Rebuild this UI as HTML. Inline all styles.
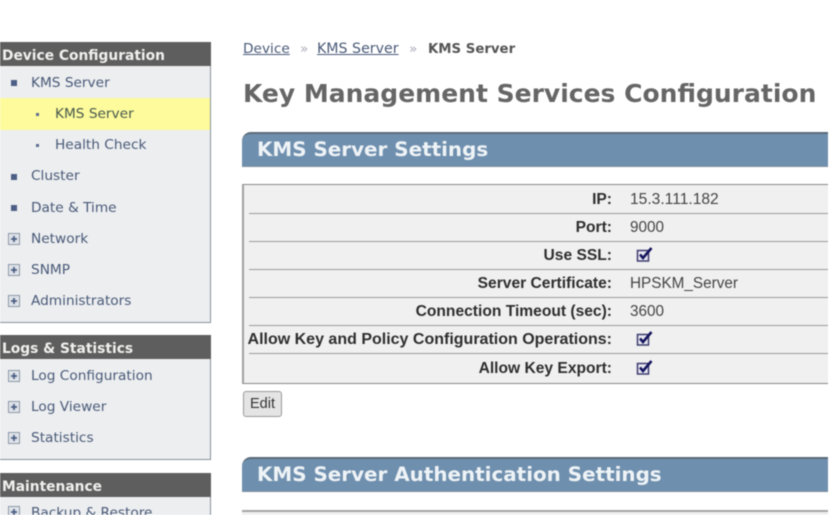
<!DOCTYPE html>
<html>
<head>
<meta charset="utf-8">
<style>
html,body{margin:0;padding:0;background:#fff}
body{width:829px;height:515px;overflow:hidden;position:relative}
#w{position:absolute;left:0;top:0;width:829px;height:515px;overflow:hidden;filter:blur(0.6px)}
#w div,#w span.a,#w svg{position:absolute}
.t{white-space:nowrap;line-height:16px}
.head{left:0;width:211px;background:#5e5e5e;height:24px}
.headt{left:2px;color:#f0f0ee;font:bold 13.8px/16px "DejaVu Sans",sans-serif}
.panel{left:0;width:210px;background:#eceef0;border-right:1px solid #87929b;border-bottom:1px solid #87929b}
.nav{font:13.7px/16px "DejaVu Sans",sans-serif;color:#4a5a78}
.sq{width:6px;height:6px;background:#4d5f85;left:11px}
.dot{width:3px;height:3px;background:#5c6d90;left:36px}
.banner{left:242px;width:586px;height:32px;background:#6f8fae;border-top:2px solid #5b6b7a;border-bottom:1px solid #7f8f9e;border-top-left-radius:9px}
.bant{left:257px;color:#eef3f6;font:bold 19.9px/22px "DejaVu Sans",sans-serif}
.line{left:249px;width:579px;height:1px;background:#9a9a9a}
.lab{right:217px;color:#2e2e2e;font:bold 15.6px/16px "Liberation Sans",sans-serif;text-align:right}
.val{left:630px;color:#444;font:15.3px/16px "Liberation Sans",sans-serif}
.bc{font:13.7px/16px 'DejaVu Sans',sans-serif;color:#4a5a78}
</style>
</head>
<body>
<div id="w">
<div class="head" style="top:42px"></div>
<div class="t headt" style="top:48px">Device Configuration</div>
<div class="panel" style="top:66px;height:256px"></div>
<div style="left:0;top:98px;width:210px;height:32px;background:#fdfb9b"></div>
<div class="sq" style="top:80px"></div>
<div class="t nav" style="left:31px;top:75px">KMS Server</div>
<div class="dot" style="top:113px"></div>
<div class="t nav" style="left:55px;top:106px;color:#4a5a50">KMS Server</div>
<div class="dot" style="top:144px"></div>
<div class="t nav" style="left:55px;top:137px">Health Check</div>
<div class="sq" style="top:174px"></div>
<div class="t nav" style="left:31px;top:168px">Cluster</div>
<div class="sq" style="top:205px"></div>
<div class="t nav" style="left:31px;top:200px">Date &amp; Time</div>
<svg style="left:7px;top:232px" width="15" height="15"><rect x="1.500" y="1.500" width="11" height="11" fill="#dfe3e8" stroke="#8c98a8"/><path d="M4 7h6M7 4v6" stroke="#4d5f85" stroke-width="1.800"/></svg>
<div class="t nav" style="left:31px;top:231px">Network</div>
<svg style="left:7px;top:263px" width="15" height="15"><rect x="1.500" y="1.500" width="11" height="11" fill="#dfe3e8" stroke="#8c98a8"/><path d="M4 7h6M7 4v6" stroke="#4d5f85" stroke-width="1.800"/></svg>
<div class="t nav" style="left:31px;top:262px">SNMP</div>
<svg style="left:7px;top:294px" width="15" height="15"><rect x="1.500" y="1.500" width="11" height="11" fill="#dfe3e8" stroke="#8c98a8"/><path d="M4 7h6M7 4v6" stroke="#4d5f85" stroke-width="1.800"/></svg>
<div class="t nav" style="left:31px;top:293px">Administrators</div>

<div class="head" style="top:335px"></div>
<div class="t headt" style="top:341px">Logs &amp; Statistics</div>
<div class="panel" style="top:359px;height:100px"></div>
<svg style="left:7px;top:369px" width="15" height="15"><rect x="1.500" y="1.500" width="11" height="11" fill="#dfe3e8" stroke="#8c98a8"/><path d="M4 7h6M7 4v6" stroke="#4d5f85" stroke-width="1.800"/></svg>
<div class="t nav" style="left:31px;top:368px">Log Configuration</div>
<svg style="left:7px;top:400px" width="15" height="15"><rect x="1.500" y="1.500" width="11" height="11" fill="#dfe3e8" stroke="#8c98a8"/><path d="M4 7h6M7 4v6" stroke="#4d5f85" stroke-width="1.800"/></svg>
<div class="t nav" style="left:31px;top:399px">Log Viewer</div>
<svg style="left:7px;top:431px" width="15" height="15"><rect x="1.500" y="1.500" width="11" height="11" fill="#dfe3e8" stroke="#8c98a8"/><path d="M4 7h6M7 4v6" stroke="#4d5f85" stroke-width="1.800"/></svg>
<div class="t nav" style="left:31px;top:430px">Statistics</div>

<div class="head" style="top:473px"></div>
<div class="t headt" style="top:479px">Maintenance</div>
<div class="panel" style="top:497px;height:30px"></div>
<svg style="left:7px;top:505px" width="15" height="15"><rect x="1.500" y="1.500" width="11" height="11" fill="#dfe3e8" stroke="#8c98a8"/><path d="M4 7h6M7 4v6" stroke="#4d5f85" stroke-width="1.800"/></svg>
<div class="t nav" style="left:31px;top:505px">Backup &amp; Restore</div>

<div class="t bc" style="left:243px;top:41px"><u>Device</u></div>
<div class="t bc" style="left:300px;top:41px;color:#aab">»</div>
<div class="t bc" style="left:317px;top:41px;font-size:14.2px"><u>KMS Server</u></div>
<div class="t bc" style="left:409px;top:41px;color:#aab">»</div>
<div class="t" style="left:428px;top:42px;font:bold 13.3px/16px 'DejaVu Sans',sans-serif;color:#555">KMS Server</div>

<div class="t" style="left:243px;top:79px;font:bold 25px/30px 'DejaVu Sans',sans-serif;color:#666">Key Management Services Configuration</div>

<div class="banner" style="top:132px"></div>
<div class="t bant" style="top:139px">KMS Server Settings</div>

<div style="left:242px;top:184px;height:198px;background:#f0f0f0;border-top:1px solid #8a8a8a;border-left:2px solid #a0a0a0;border-bottom:1px solid #8a8a8a;box-sizing:content-box;width:584px"></div>
<div class="line" style="top:213px"></div>
<div class="line" style="top:241px"></div>
<div class="line" style="top:269px"></div>
<div class="line" style="top:297px"></div>
<div class="line" style="top:325px"></div>
<div class="line" style="top:353px"></div>

<div class="t lab" style="top:192px">IP:</div>
<div class="t val" style="top:192px;font-size:15.6px">15.3.111.182</div>
<div class="t lab" style="top:220px">Port:</div>
<div class="t val" style="top:220px">9000</div>
<div class="t lab" style="top:248px">Use SSL:</div>
<div class="t lab" style="top:276px">Server Certificate:</div>
<div class="t val" style="top:276px">HPSKM_Server</div>
<div class="t lab" style="top:304px">Connection Timeout (sec):</div>
<div class="t val" style="top:304px">3600</div>
<div class="t lab" style="top:332px;font-size:16px">Allow Key and Policy Configuration Operations:</div>
<div class="t lab" style="top:361px">Allow Key Export:</div>

<svg style="left:636px;top:245px" width="18" height="18"><rect x="1.500" y="5.500" width="11" height="10.500" fill="#e8e8f0" stroke="#3c3c70" stroke-width="1.500"/><path d="M4 9.500l3 3.500L15.500 3" fill="none" stroke="#14145e" stroke-width="2.600"/></svg>
<svg style="left:636px;top:329px" width="18" height="18"><rect x="1.500" y="5.500" width="11" height="10.500" fill="#e8e8f0" stroke="#3c3c70" stroke-width="1.500"/><path d="M4 9.500l3 3.500L15.500 3" fill="none" stroke="#14145e" stroke-width="2.600"/></svg>
<svg style="left:636px;top:358px" width="18" height="18"><rect x="1.500" y="5.500" width="11" height="10.500" fill="#e8e8f0" stroke="#3c3c70" stroke-width="1.500"/><path d="M4 9.500l3 3.500L15.500 3" fill="none" stroke="#14145e" stroke-width="2.600"/></svg>

<div style="left:243px;top:391px;width:37px;height:24px;background:#e4e4e4;border:1px solid #9a9a9a;border-radius:3px;text-align:center;font:14.5px/24px 'Liberation Sans',sans-serif;color:#333">Edit</div>

<div class="banner" style="top:457px"></div>
<div class="t bant" style="top:464px">KMS Server Authentication Settings</div>

<div style="left:242px;top:510px;width:586px;height:6px;background:#f0f0f0;border-top:2px solid #a5a5a5"></div>
</div>
</body>
</html>
